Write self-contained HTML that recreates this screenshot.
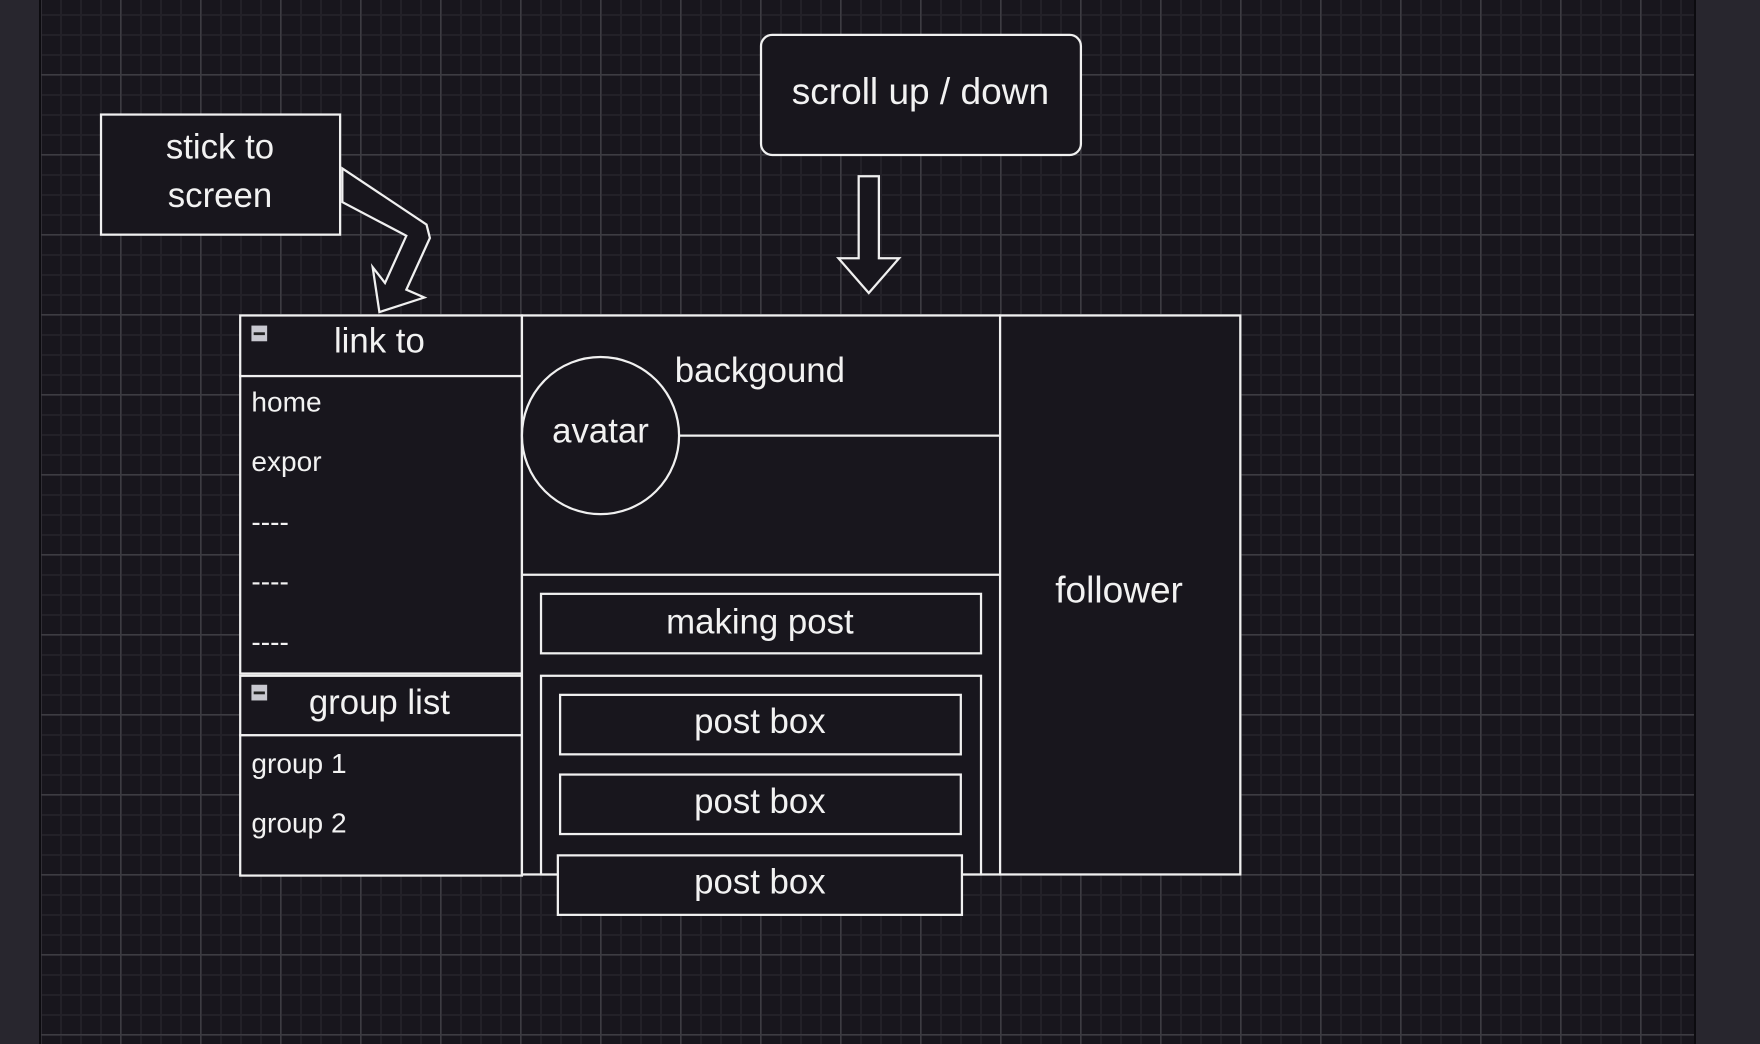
<!DOCTYPE html>
<html><head><meta charset="utf-8"><style>
html,body{margin:0;padding:0;width:1760px;height:1044px;overflow:hidden;background:#18161d}
#grid{position:absolute;left:0;top:0;width:1760px;height:1044px;
background-image:
linear-gradient(to right,#3d3c42 0 1.5px,transparent 1.5px),
linear-gradient(to bottom,#3d3c42 0 1.5px,transparent 1.5px),
linear-gradient(to right,#232128 0 2px,transparent 2px),
linear-gradient(to bottom,#232128 0 2px,transparent 2px);
background-size:80px 80px,80px 80px,20px 20px,20px 20px;
background-position:40px 0,0 74px,0 0,0 14px;}
.side{position:absolute;top:0;height:1044px;background:#28262e}
svg{position:absolute;left:0;top:0}
text{font-family:"Liberation Sans",sans-serif;fill:#f2f2f2}
</style></head><body>
<div id="grid"></div>
<div class="side" style="left:0;width:39px;border-right:2px solid #0c0b0f"></div>
<div class="side" style="left:1694px;width:66px;border-left:2px solid #0c0b0f"></div>
<svg width="1760" height="1044" viewBox="0 0 1568 930">
<g fill="#18161d" stroke="#f0f0f0" stroke-width="2">
<rect x="90" y="102" width="213" height="107"/>
<polygon points="305,150 380,200 383,212 362,258 378,265 338,278 332,238 343,252 362,210 305,180"/>
<rect x="678" y="31" width="285" height="107" rx="10"/>
<polygon points="765,157 783,157 783,230 801,230 774,261 747,230 765,230"/>
<rect x="214" y="281" width="251" height="54"/>
<rect x="214" y="335" width="251" height="265"/>
<rect x="214" y="602" width="251" height="53"/>
<rect x="214" y="655" width="251" height="125"/>
<rect x="465" y="281" width="426" height="498"/>
<line x1="605" y1="388" x2="891" y2="388"/>
<line x1="465" y1="512" x2="891" y2="512"/>
<circle cx="535" cy="388" r="70"/>
<rect x="482" y="529" width="392" height="53"/>
<rect x="482" y="602" width="392" height="177"/>
<rect x="499" y="619" width="357" height="53"/>
<rect x="499" y="690" width="357" height="53"/>
<rect x="497" y="762" width="360" height="53"/>
<rect x="891" y="281" width="214" height="498"/>
</g>
<rect x="224" y="290" width="14" height="14" fill="#c8c8d0"/><rect x="226" y="296" width="10" height="2.5" fill="#222"/>
<rect x="224" y="610" width="14" height="14" fill="#c8c8d0"/><rect x="226" y="616" width="10" height="2.5" fill="#222"/>
<g text-anchor="middle" dominant-baseline="middle">
<text x="196" y="133" font-size="31">stick to</text>
<text x="196" y="176" font-size="31">screen</text>
<text x="820" y="84" font-size="33">scroll up / down</text>
<text x="338" y="306" font-size="31">link to</text>
<text x="338" y="628" font-size="31">group list</text>
<text x="535" y="386" font-size="31">avatar</text>
<text x="677" y="332" font-size="31">backgound</text>
<text x="677" y="556" font-size="31">making post</text>
<text x="677" y="645" font-size="31">post box</text>
<text x="677" y="716" font-size="31">post box</text>
<text x="677" y="788" font-size="31">post box</text>
<text x="997" y="528" font-size="33">follower</text>
</g>
<g dominant-baseline="middle" font-size="25">
<text x="224" y="360">home</text>
<text x="224" y="413">expor</text>
<text x="224" y="467">----</text>
<text x="224" y="520">----</text>
<text x="224" y="574">----</text>
<text x="224" y="682">group 1</text>
<text x="224" y="735">group 2</text>
</g>
</svg>
</body></html>
